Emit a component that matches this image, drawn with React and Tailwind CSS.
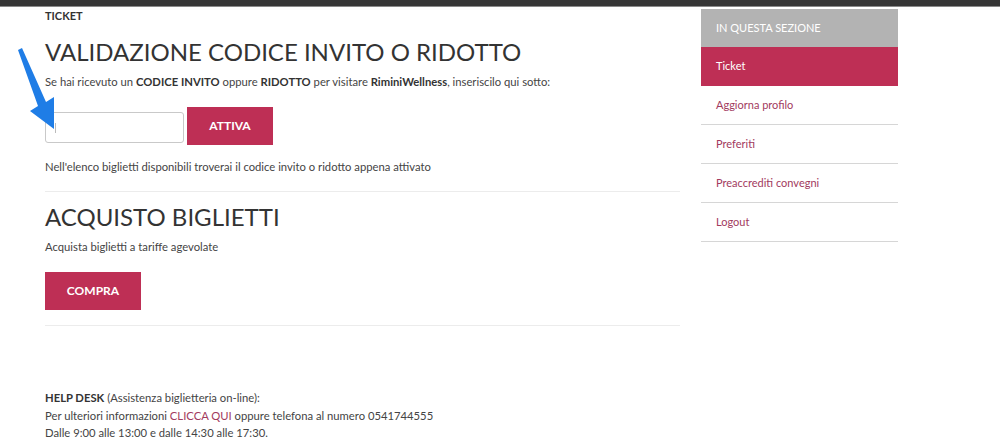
import React from 'react';

const menuItems = ['Aggiorna profilo', 'Preferiti', 'Preaccrediti convegni', 'Logout'];

const Arrow = () => (
  <svg className="absolute left-[12px] top-[44px]" width="50" height="90" viewBox="0 0 50 90">
    <path d="M6 6 L10 4 L34 58 L42 53 L42 85 L18 67 L26 62 Z" fill="#1f7de6" strokeLinejoin="round" />
  </svg>
);

const App = () => {
  return (
    <div className="relative w-[1000px] h-[448px] bg-white overflow-hidden text-[#444]" style={{ fontFamily: 'Lato, "Open Sans", sans-serif' }}>
      <div className="h-[7px] bg-[#363636] border-b border-[#8a8a8a]" />
      <div className="flex pl-[45px]">
        {/* main column */}
        <div className="w-[635px]">
          <div className="text-[11px] font-bold leading-[14px] mt-[2px] text-[#333]">TICKET</div>
          <h1 className="text-[24px] leading-[30px] mt-[14px] text-[#333] font-normal">VALIDAZIONE CODICE INVITO O RIDOTTO</h1>
          <p className="text-[11.25px] leading-[14px] mt-[8px]">
            Se hai ricevuto un <b className="text-[#333]">CODICE INVITO</b> oppure <b className="text-[#333]">RIDOTTO</b> per visitare <b className="text-[#333]">RiminiWellness</b>, inseriscilo qui sotto:
          </p>
          <div className="flex items-end gap-[3px] mt-[18px]">
            <div className="w-[139px] h-[31px] border border-[#c9c9c9] rounded-[3px] mb-[2px] flex items-center pl-[9px]">
              <span className="w-px h-[10px] bg-[#bbb]" />
            </div>
            <button className="w-[86px] h-[38px] bg-[#be2f55] text-white text-[12px] font-bold">ATTIVA</button>
          </div>
          <p className="text-[11.25px] leading-[14px] mt-[15px]">Nell'elenco biglietti disponibili troverai il codice invito o ridotto appena attivato</p>
          <div className="border-t border-[#ececec] mt-[17px]" />
          <h2 className="text-[24px] leading-[30px] mt-[10px] text-[#333] font-normal">ACQUISTO BIGLIETTI</h2>
          <p className="text-[11.25px] leading-[14px] mt-[8px]">Acquista biglietti a tariffe agevolate</p>
          <button className="w-[96px] h-[38px] bg-[#be2f55] text-white text-[12px] font-bold mt-[18px]">COMPRA</button>
          <div className="border-t border-[#ececec] mt-[15px]" />
          <div className="text-[11.25px] leading-[17.5px] mt-[63px]">
            <div><b className="text-[#333]">HELP DESK</b> (Assistenza biglietteria on-line):</div>
            <div>Per ulteriori informazioni <span className="text-[#a23a5e]">CLICCA QUI</span> oppure telefona al numero 0541744555</div>
            <div>Dalle 9:00 alle 13:00 e dalle 14:30 alle 17:30.</div>
          </div>
        </div>

        {/* sidebar */}
        <div className="w-[197px] ml-[21px] mt-[2px]">
          <div className="h-[38px] bg-[#b3b3b3] text-white text-[11px] flex items-center pl-[15px]">IN QUESTA SEZIONE</div>
          <div className="h-[39px] bg-[#be2f55] text-white text-[11px] flex items-center pl-[15px]">Ticket</div>
          {menuItems.map(item => (
            <div key={item} className="h-[39px] border-b border-[#d6d6d6] text-[#a23a5e] text-[11px] flex items-center pl-[15px]">{item}</div>
          ))}
        </div>
      </div>
      <Arrow />
    </div>
  );
};

export default App;
